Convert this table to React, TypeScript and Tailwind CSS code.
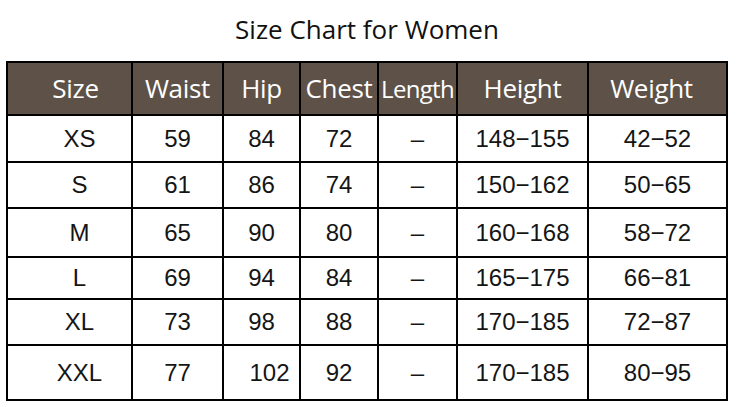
import React from 'react';

const headers = ['Size', 'Waist', 'Hip', 'Chest', 'Length', 'Height', 'Weight'];
const widths = ['w-[125px]', 'w-[91px]', 'w-[77px]', 'w-[78px]', 'w-[79px]', 'w-[131px]', 'w-[139px]'];

const rows = [
  { h: 'h-[47px]', cells: ['XS', '59', '84', '72', '–', '148−155', '42−52'] },
  { h: 'h-[46px]', cells: ['S', '61', '86', '74', '–', '150−162', '50−65'] },
  { h: 'h-[49px]', cells: ['M', '65', '90', '80', '–', '160−168', '58−72'] },
  { h: 'h-[42px]', cells: ['L', '69', '94', '84', '–', '165−175', '66−81'] },
  { h: 'h-[46px]', cells: ['XL', '73', '98', '88', '–', '170−185', '72−87'] },
  { h: 'h-[55px]', cells: ['XXL', '77', '102', '92', '–', '170−185', '80−95'] },
];

export default function App() {
  return (
    <div className="w-[740px] h-[407px] bg-white overflow-hidden">
      <h1 className="pt-[11px] pr-[6px] h-[61px] text-center text-[26px] leading-[36px] text-[#111] font-['Open_Sans',sans-serif]">
        Size Chart for Women
      </h1>
      <table className="ml-[6px] w-[721px] table-fixed border-collapse">
        <thead>
          <tr className="h-[53px] bg-[#5e5148]">
            {headers.map((h, i) => (
              <th
                key={h}
                className={`${widths[i]} border-2 border-black font-normal text-white font-['Open_Sans',sans-serif] ${i === 4 ? 'text-[24px] tracking-[-0.7px] whitespace-nowrap' : 'text-[26px] tracking-[-0.3px]'} ${i === 0 ? 'pl-3' : ''} ${i === 6 ? 'pr-3' : ''}`}
              >
                {h}
              </th>
            ))}
          </tr>
        </thead>
        <tbody>
          {rows.map((row) => (
            <tr key={row.cells[0]} className={row.h}>
              {row.cells.map((c, i) => (
                <td
                  key={i}
                  className={`border-2 border-black text-center text-[24px] text-[#151515] font-['Liberation_Sans',Arial,sans-serif] ${i === 0 ? 'pl-5' : ''} ${c === '102' ? 'pl-4' : ''}`}
                >
                  {c}
                </td>
              ))}
            </tr>
          ))}
        </tbody>
      </table>
    </div>
  );
}
